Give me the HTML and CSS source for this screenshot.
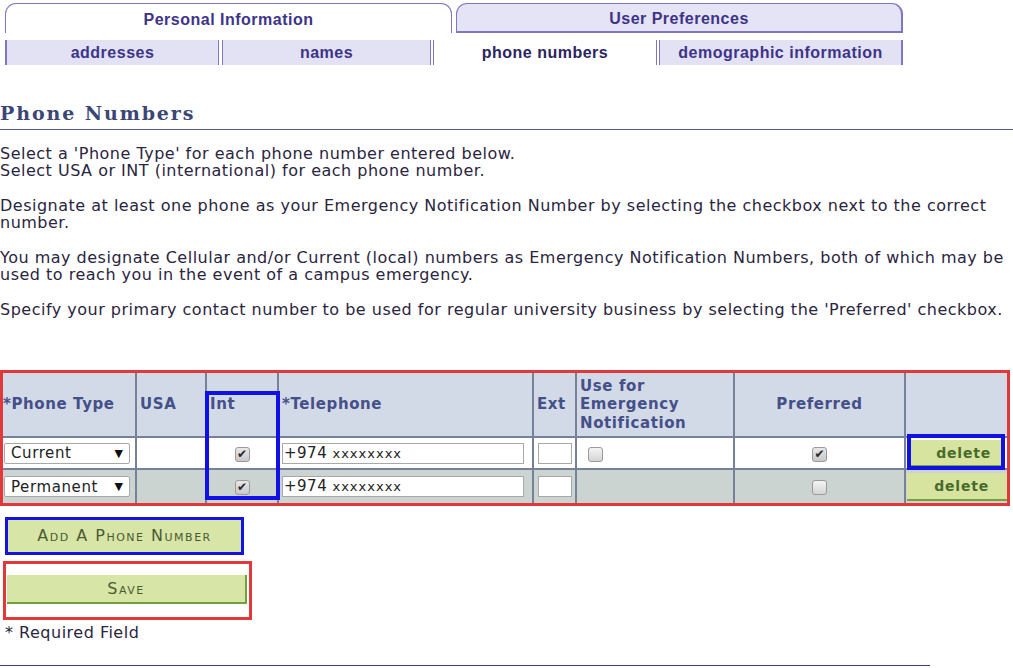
FILE: index.html
```html
<!DOCTYPE html>
<html>
<head>
<meta charset="utf-8">
<link rel="stylesheet" href="styles.css">
</head>
<body>
<div class="page">
  <div class="tabs">
    <div class="tab tab-active">Personal Information</div>
    <div class="tab tab-idle">User Preferences</div>
  </div>
  <div class="subtabs">
    <div class="sub sub1">addresses</div>
    <div class="sub sub2">names</div>
    <div class="sub sub3">phone numbers</div>
    <div class="sub sub4">demographic information</div>
  </div>

  <h1 class="title">Phone Numbers</h1>

  <div class="intro">
    <p>Select a 'Phone Type' for each phone number entered below.<br>Select USA or INT (international) for each phone number.</p>
    <p>Designate at least one phone as your Emergency Notification Number by selecting the checkbox next to the correct number.</p>
    <p>You may designate Cellular and/or Current (local) numbers as Emergency Notification Numbers, both of which may be used to reach you in the event of a campus emergency.</p>
    <p>Specify your primary contact number to be used for regular university business by selecting the 'Preferred' checkbox.</p>
  </div>

  <div class="frame">
    <table class="grid">
      <colgroup>
        <col class="c1"><col class="c2"><col class="c3"><col class="c4"><col class="c5"><col class="c6"><col class="c7"><col class="c8">
      </colgroup>
      <thead>
        <tr>
          <th>*Phone Type</th>
          <th>USA</th>
          <th>Int</th>
          <th>*Telephone</th>
          <th>Ext</th>
          <th>Use for Emergency Notification</th>
          <th class="center">Preferred</th>
          <th></th>
        </tr>
      </thead>
      <tbody>
        <tr class="r1">
          <td><div class="sel"><span>Current</span><span class="arrow">&#9660;</span></div></td>
          <td></td>
          <td class="cb-cell"><span class="cb on">&#10004;</span></td>
          <td><div class="inp wide">+974 <span class="xs">xxxxxxxx</span></div></td>
          <td><div class="inp ext"></div></td>
          <td class="emerg"><span class="cb"></span></td>
          <td class="center"><span class="cb on">&#10004;</span></td>
          <td class="del-cell"><div class="del del1">delete</div></td>
        </tr>
        <tr class="r2">
          <td><div class="sel"><span>Permanent</span><span class="arrow">&#9660;</span></div></td>
          <td></td>
          <td class="cb-cell"><span class="cb on">&#10004;</span></td>
          <td><div class="inp wide">+974 <span class="xs">xxxxxxxx</span></div></td>
          <td><div class="inp ext"></div></td>
          <td class="emerg"></td>
          <td class="center"><span class="cb"></span></td>
          <td class="del-cell"><div class="del del2">delete</div></td>
        </tr>
      </tbody>
    </table>
    <div class="hl hl-int"></div>
    <div class="hl hl-del"></div>
  </div>

  <div class="box box-blue"><div class="btn btn-add">Add A Phone Number</div></div>
  <div class="box box-red"><div class="btn btn-save">Save</div></div>

  <p class="req">* Required Field</p>
  <div class="bottom-rule"></div>
</div>
</body>
</html>
```

FILE: styles.css
```css
html, body {
  margin: 0;
  padding: 0;
  background: #ffffff;
  overflow: hidden;
}
.page {
  width: 1013px;
  font-family: "DejaVu Sans", Verdana, sans-serif;
  color: #2a2540;
}

/* Tabs */
.tabs {
  display: flex;
  margin: 3px 0 0 5px;
  gap: 4px;
  height: 30px;
}
.tab {
  width: 447px;
  height: 30px;
  box-sizing: border-box;
  border: 1px solid #7d76c2;
  border-radius: 11px 11px 0 0;
  font-family: "Liberation Sans", Arial, sans-serif;
  font-weight: bold;
  font-size: 16px;
  letter-spacing: 0.5px;
  color: #3d3488;
  display: flex;
  align-items: center;
  justify-content: center;
  padding-top: 2px;
}
.tab-active {
  background: #ffffff;
  border-bottom: none;
}
.tab-idle {
  background: #e5e3f6;
  border-width: 1px 2px 2px 1px;
}

.subtabs {
  display: flex;
  margin: 7px 0 0 5px;
  height: 25px;
}
.sub {
  box-sizing: border-box;
  background: #e3e1f4;
  font-family: "Liberation Sans", Arial, sans-serif;
  font-weight: bold;
  font-size: 16px;
  letter-spacing: 0.5px;
  color: #3d3488;
  display: flex;
  align-items: center;
  justify-content: center;
  border-left: 1px solid #7d76c2;
  border-right: 1px solid #7d76c2;
}
.sub1 { width: 214px; border-left-width: 2px; margin-right: 3px; }
.sub2 { width: 209px; margin-right: 2px; }
.sub3 { width: 224px; margin-right: 2px; background: #ffffff; color: #2b2560; }
.sub4 { width: 244px; border-right-width: 2px; }

/* Heading */
.title {
  margin: 36px 0 0 0;
  height: 29px;
  box-sizing: border-box;
  border-bottom: 1px solid #535a8c;
  font-family: "DejaVu Serif", Georgia, serif;
  font-size: 19px;
  letter-spacing: 1.9px;
  font-weight: bold;
  color: #3b4676;
  line-height: 22px;
  padding-top: 1px;
}

.intro {
  margin-top: 15px;
  width: 1030px;
  font-size: 16px;
  letter-spacing: 0.5px;
  line-height: 17px;
}
.intro p {
  margin: 0 0 18px 0;
}

/* Table */
.frame {
  position: relative;
  margin-top: 52px;
  width: 1010px;
  box-sizing: border-box;
  border: 3px solid #e1383c;
}
.grid {
  border-collapse: collapse;
  table-layout: fixed;
  width: 1004px;
}
.c1 { width: 133px; }
.c2 { width: 70px; }
.c3 { width: 72px; }
.c4 { width: 255px; }
.c5 { width: 43px; }
.c6 { width: 158px; }
.c7 { width: 171px; }
.c8 { width: 102px; }
.grid th {
  background: #d2dae8;
  height: 64px;
  box-sizing: border-box;
  text-align: left;
  font-size: 15px;
  letter-spacing: 0.6px;
  line-height: 18.5px;
  font-weight: bold;
  color: #454f88;
  padding: 0 3px;
  border: 2px solid #76829a;
  border-top: none;
}
.grid th:first-child { border-left: none; padding-left: 0; }
.grid th:last-child { border-right: none; }
.grid th.center { text-align: center; }
.grid td {
  height: 32px;
  box-sizing: border-box;
  border: 2px solid #76829a;
  padding: 0 3px;
  vertical-align: middle;
}
.grid td:first-child { border-left: none; padding-left: 0; }
.grid td:last-child { border-right: none; }
.grid tr.r2 td { border-bottom: none; background: #ccd4d1; height: 34px; }
.grid tr.r1 td { background: #ffffff; }
.center { text-align: center; }
.cb-cell { text-align: center; }
.grid td.emerg { text-align: left; padding-left: 11px; }

.sel {
  width: 126px;
  height: 21px;
  box-sizing: border-box;
  border: 1px solid #a9a9a9;
  border-radius: 2px;
  background: #ffffff;
  display: flex;
  align-items: center;
  justify-content: space-between;
  padding: 0 6px 0 6px;
  font-size: 15px;
  letter-spacing: 0.6px;
  color: #222;
  margin-left: 1px;
}
.arrow { font-size: 11px; color: #111; letter-spacing: 0; }

.inp {
  height: 21px;
  box-sizing: border-box;
  border: 1px solid #a9a9a9;
  background: #ffffff;
  font-size: 15px;
  letter-spacing: 0.5px;
  line-height: 19px;
  padding-left: 1px;
  color: #222;
}
.xs { font-size: 13px; letter-spacing: 1px; }
.inp.wide { width: 242px; }
.inp.ext { width: 34px; margin-left: 1px; }

.cb {
  display: inline-block;
  width: 15px;
  height: 15px;
  box-sizing: border-box;
  border: 1px solid #9a9a9a;
  border-radius: 3px;
  background: linear-gradient(#f4f4f4, #d4d4d4);
  font-size: 12px;
  line-height: 13px;
  text-align: center;
  color: #2a2a2a;
  vertical-align: middle;
}
.cb.on { background: linear-gradient(#e8e8e8, #c8c8c8); }

.del-cell { padding: 0 !important; }
.del {
  background: #d6e4a0;
  color: #486a2c;
  font-weight: bold;
  font-size: 14px;
  text-align: right;
  box-sizing: border-box;
  letter-spacing: 0.8px;
}
.del1 { height: 27px; line-height: 27px; margin: 0 3px 0 4px; border-bottom: 2px solid #7da04a; padding-right: 13px; }
.del2 { height: 28px; line-height: 27px; margin: 0 0 0 1px; border-bottom: 2px solid #76a03f; padding-right: 18px; }

.hl {
  position: absolute;
  border: 4px solid #1111e6;
  box-sizing: border-box;
}
.hl-int { left: 202px; top: 18px; width: 75px; height: 109px; }
.hl-del { left: 904px; top: 61px; width: 98px; height: 36px; }

/* Buttons */
.box {
  box-sizing: border-box;
  border: 3px solid;
}
.box-blue {
  margin: 11px 0 0 5px;
  width: 239px;
  height: 38px;
  border-color: #1414e0;
}
.box-red {
  margin: 6px 0 0 3px;
  width: 249px;
  height: 59px;
  border-color: #e1383c;
  padding: 11px 0 0 1px;
}
.btn {
  background: #d7e5a6;
  color: #4c5a34;
  font-variant: small-caps;
  text-transform: capitalize;
  text-align: center;
  font-size: 16px;
  letter-spacing: 1.5px;
  box-sizing: border-box;
}
.btn-add {
  height: 32px;
  line-height: 32px;
  width: 233px;
}
.btn-save {
  height: 29px;
  line-height: 27px;
  width: 240px;
  border-right: 2px solid #72a03c;
  border-bottom: 2px solid #72a03c;
}

.req {
  margin: 4px 0 0 5px;
  font-size: 16px;
  letter-spacing: 0.5px;
  line-height: 17px;
}
.bottom-rule {
  margin-top: 24px;
  width: 930px;
  height: 1px;
  background: #3c3f78;
}
```
